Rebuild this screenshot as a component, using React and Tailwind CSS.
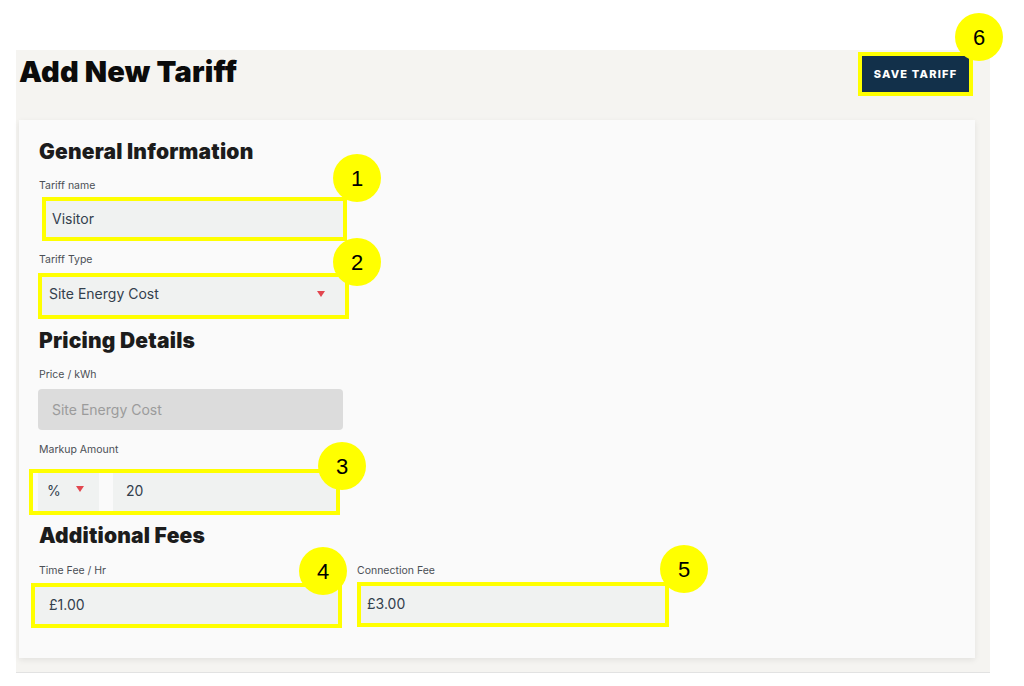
const font = { fontFamily: 'Inter, "Noto Sans", sans-serif' };

const Label = ({ children, className = '' }) => (
  <p className={`text-[10.5px] leading-[14px] text-[#4b4f55] ${className}`}>{children}</p>
);

const Caret = () => (
  <span className="inline-block w-0 h-0 border-l-[4px] border-r-[4px] border-t-[6px] border-l-transparent border-r-transparent border-t-[#e2474f]" />
);

const Marker = ({ n, className }) => (
  <div
    className={`absolute w-[48px] h-[48px] rounded-full bg-[#ffff00] flex items-center justify-center text-[22px] text-black ${className}`}
    style={{ fontFamily: '"Liberation Sans", Arial, sans-serif' }}
  >
    {n}
  </div>
);

const Heading = ({ children, className = '' }) => (
  <h2 className={`text-[21px] leading-[28px] font-black text-[#1c1c1c] tracking-[0.2px] ${className}`}>{children}</h2>
);

const App = () => {
  return (
    <div className="relative w-[1024px] h-[686px] bg-white overflow-hidden" style={font}>
      <div className="pt-[50px] pl-4">
        <div className="w-[974px] h-[623px] bg-[#f5f4f1] border-b border-[#e2e2e2]">
          <div className="flex items-start justify-between h-[70px]">
            <h1 className="pl-[3px] pt-[4px] text-[29px] leading-[36px] font-black text-[#0b0b0b] tracking-[0.2px]">
              Add New Tariff
            </h1>
            <div className="mt-[2px] mr-[17px] border-4 border-[#ffff00]">
              <button className="block w-[107px] h-[36px] bg-[#12304a] text-white text-[11px] font-extrabold tracking-[1.2px]">
                SAVE TARIFF
              </button>
            </div>
          </div>

          <div className="ml-[3px] w-[956px] bg-[#fafafa] shadow-[0_2px_6px_rgba(0,0,0,0.08)] pl-5 pt-[18px] pb-[30px]">
            <Heading>General Information</Heading>
            <Label className="mt-[13px]">Tariff name</Label>
            <div className="mt-[4px] ml-[3px] w-[305px] h-[44px] border-4 border-[#ffff00] bg-[#f0f2f1] flex items-center pl-[6px] pb-[2px] text-[14px] text-[#33404d]">
              Visitor
            </div>
            <Label className="mt-[12px]">Tariff Type</Label>
            <div className="mt-[6px] -ml-px w-[311px] h-[46px] border-4 border-[#ffff00] bg-[#f0f2f1] flex items-center justify-between pl-[7px] pr-[20px] pb-[5px] text-[14px] text-[#33404d]">
              <span>Site Energy Cost</span>
              <span className="-mt-[4px]"><Caret /></span>
            </div>

            <Heading className="mt-[8px]">Pricing Details</Heading>
            <Label className="mt-[13px]">Price / kWh</Label>
            <div className="mt-[7px] -ml-px w-[305px] h-[41px] rounded bg-[#dcdcdc] flex items-center pl-[14px] text-[14px] text-[#9b9b9b]">
              Site Energy Cost
            </div>
            <Label className="mt-[13px]">Markup Amount</Label>
            <div className="mt-[12px] -ml-[10px] w-[311px] h-[46px] border-4 border-[#ffff00] bg-[#fafafa] flex pl-[5px] text-[14px] text-[#33404d]">
              <div className="w-[61px] bg-[#f0f2f1] flex items-center pl-[9px] gap-[15px] pb-[3px]">
                <span>%</span>
                <span className="-mt-[8px]"><Caret /></span>
              </div>
              <div className="ml-[14px] flex-1 bg-[#f0f2f1] flex items-center pl-[13px] pb-[3px]">20</div>
            </div>

            <Heading className="mt-[7px]">Additional Fees</Heading>
            <div className="mt-[14px] flex">
              <div>
                <Label>Time Fee / Hr</Label>
                <div className="mt-[5px] -ml-[8px] w-[311px] h-[45px] border-4 border-[#ffff00] bg-[#f0f2f1] flex items-center pl-[14px] pb-[2px] text-[14px] text-[#33404d]">
                  £1.00
                </div>
              </div>
              <div className="ml-[15px]">
                <Label>Connection Fee</Label>
                <div className="mt-[4px] w-[312px] h-[45px] border-4 border-[#ffff00] bg-[#f0f2f1] flex items-center pl-[6px] pb-[2px] text-[14px] text-[#33404d]">
                  £3.00
                </div>
              </div>
            </div>
          </div>
        </div>
      </div>

      <Marker n="1" className="left-[333px] top-[154px]" />
      <Marker n="2" className="left-[333px] top-[238px]" />
      <Marker n="3" className="left-[318px] top-[442px]" />
      <Marker n="4" className="left-[299px] top-[547px]" />
      <Marker n="5" className="left-[660px] top-[545px]" />
      <Marker n="6" className="left-[955px] top-[13px]" />
    </div>
  );
};

export default App;
